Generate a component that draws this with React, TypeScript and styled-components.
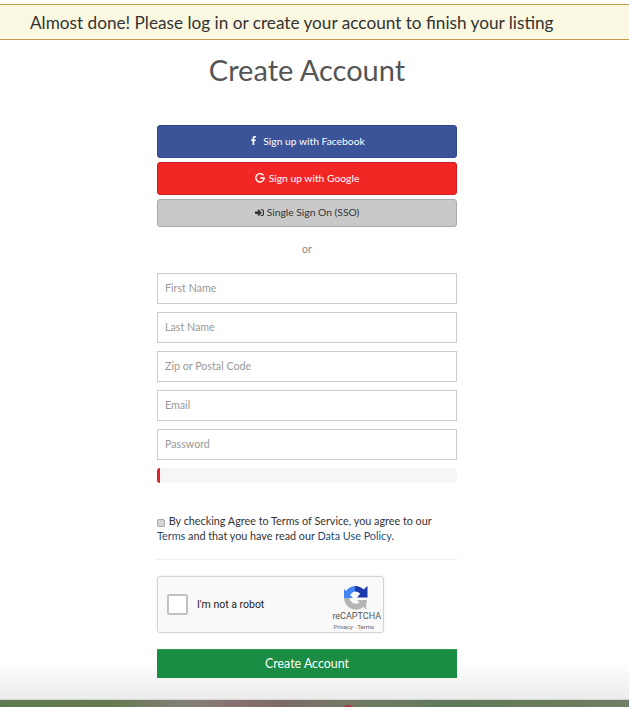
import React from "react";
import styled, { createGlobalStyle } from "styled-components";
import { FaFacebookF, FaSignInAlt } from "react-icons/fa";

const Global = createGlobalStyle`
  html, body { margin: 0; padding: 0; background: #fff; }
  body { font-family: Lato, "Open Sans", sans-serif; }
  * { box-sizing: border-box; }
`;

const Page = styled.div`
  width: 629px;
  height: 707px;
  overflow: hidden;
  display: flex;
  flex-direction: column;
  background: linear-gradient(to bottom, #fff 0, #fff 660px, #ececec 699px);
`;

const Banner = styled.div`
  height: 36px;
  margin-top: 4px;
  flex: none;
  display: flex;
  align-items: center;
  padding-left: 30px;
  background: #fbf8e1;
  border-bottom: 1px solid #c99a4b;
  border-top: 1px solid #c99a4b;
  font-size: 17.2px;
  color: #333;
`;

const Main = styled.main`
  flex: 1;
  width: 614px;
  display: flex;
  flex-direction: column;
  align-items: center;
`;

const Title = styled.h1`
  margin: 11px 0 0;
  font-size: 29px;
  line-height: 38px;
  font-weight: 400;
  color: #555;
`;

const Form = styled.form`
  width: 300px;
  margin-top: 36px;
  display: flex;
  flex-direction: column;
`;

const Social = styled.button<{ $bg: string; $edge: string; $fg: string; $h: number; $after: number; $gap: number }>`
  height: ${(p) => p.$h}px;
  margin-bottom: ${(p) => p.$after}px;
  display: flex;
  align-items: center;
  justify-content: center;
  gap: ${(p) => p.$gap}px;
  padding: 0 0 2px;
  background: ${(p) => p.$bg};
  border: 1px solid ${(p) => p.$edge};
  border-radius: 3px;
  color: ${(p) => p.$fg};
  font: 400 10.3px Lato, sans-serif;
  svg { flex: none; }
`;

const Or = styled.div`
  margin-top: 15px;
  height: 14px;
  line-height: 14px;
  text-align: center;
  font-size: 10.5px;
  color: #888;
`;

const Fields = styled.div`
  margin-top: 17px;
  display: flex;
  flex-direction: column;
  gap: 8px;
`;

const Input = styled.input`
  height: 31px;
  width: 100%;
  padding: 0 7px 2px;
  border: 1px solid #ccc;
  border-radius: 0;
  background: #fff;
  font: 400 10.7px Lato, sans-serif;
  outline: none;
  &::placeholder { color: #999; opacity: 1; }
`;

const Meter = styled.div`
  height: 15px;
  margin-top: 8px;
  background: #f6f6f6;
  border-radius: 3px;
  overflow: hidden;
`;

const MeterFill = styled.div`
  height: 100%;
  background: #d9232e;
`;

const Terms = styled.label`
  display: block;
  margin-top: 30px;
  font-size: 10.8px;
  line-height: 15px;
  color: #333;
`;

const Check = styled.input`
  appearance: none;
  display: inline-block;
  width: 8px;
  height: 8px;
  margin: 0 1px 0 0;
  vertical-align: -2px;
  background: #d4d4d4;
  border: 1px solid #a8a8a8;
  border-radius: 2px;
`;

const Link = styled.a`
  color: #1f4e79;
  text-decoration: none;
`;

const Rule = styled.hr`
  width: 100%;
  height: 1px;
  margin: 16px 0 16px;
  border: 0;
  background: #eee;
`;

const Captcha = styled.div`
  width: 227px;
  height: 57px;
  display: flex;
  align-items: center;
  padding: 0 2px 1px 9px;
  background: #f9f9f9;
  border: 1px solid #d3d3d3;
  border-radius: 3px;
  box-shadow: 0 0 3px rgba(0, 0, 0, 0.08);
`;

const CaptchaBox = styled.span`
  width: 21px;
  height: 21px;
  flex: none;
  background: #fff;
  border: 2px solid #c1c1c1;
  border-radius: 2px;
`;

const CaptchaLabel = styled.span`
  margin-left: 9px;
  flex: 1;
  font: 400 10.5px Roboto, sans-serif;
  color: #222;
`;

const CaptchaBrand = styled.div`
  display: flex;
  flex-direction: column;
  align-items: center;
  padding-top: 8px;
`;

const LogoWrap = styled.span`
  display: block;
  height: 24px;
  margin-right: 2px;
`;

const BrandName = styled.span`
  font: 400 9px/12px Roboto, sans-serif;
  color: #555;
`;

const BrandLinks = styled.span`
  align-self: flex-start;
  margin-left: 1px;
  font: 400 6px/9px Roboto, sans-serif;
  color: #666;
`;

const Submit = styled.button`
  height: 29px;
  margin-top: 16px;
  padding: 0 0 2px;
  background: #1a8c44;
  border: 0;
  border-top: 1px solid #2a9a55;
  color: #fff;
  font: 400 12.4px Lato, sans-serif;
`;

const PhotoStrip = styled.div`
  height: 8px;
  flex: none;
  position: relative;
  border-top: 1px solid #d2d2d2;
  background: linear-gradient(to right, #5f7a52 0, #65794e 17%, #84807a 30%, #8a6f72 38%, #7b6a68 45%, #757a66 55%, #5f7a5a 72%, #6a7d5a 88%, #717f66 100%);
`;

const RedSpot = styled.span`
  position: absolute;
  left: 342px;
  bottom: -4px;
  width: 12px;
  height: 6px;
  border-radius: 50%;
  background: #a33b3b;
`;

const RecaptchaLogo = () => (
  <svg width="24" height="24" viewBox="0 0 24 24" aria-hidden="true">
    <path d="M11 0a12 12 0 0 1 8.6 3.4L23.5 0v11.5H13l3.2-3.7A6.4 6.4 0 0 0 11 5.4Z" fill="#1c3aa9" />
    <path d="M11 0A12 12 0 0 0 2 5L0 3v9h9L6.3 9.2A6 6 0 0 1 11 5.4Z" fill="#4285f4" />
    <path d="M0 12h5.6a6.4 6.4 0 0 0 10 4.6L13 14h10a12 12 0 0 1-.8 4v5.5L19.4 21A12 12 0 0 1 0 12Z" fill="#b4b4b4" />
  </svg>
);

const GoogleGlyph = () => (
  <svg width="10" height="10" viewBox="0 0 24 24" aria-hidden="true" fill="none" stroke="#fff" strokeWidth="3.4">
    <path d="M20 5.5A10 10 0 1 0 22 12H12.5" />
  </svg>
);

const inputs = ["First Name", "Last Name", "Zip or Postal Code", "Email", "Password"];

export default function App() {
  return (
    <Page>
      <Global />
      <Banner>Almost done! Please log in or create your account to finish your listing</Banner>
      <Main>
        <Title>Create Account</Title>
        <Form onSubmit={(e) => e.preventDefault()}>
          <Social type="button" $bg="#3b5499" $edge="#2f4a8c" $fg="#fff" $h={33} $after={4} $gap={5}>
            <FaFacebookF size={9} /> Sign up with Facebook
          </Social>
          <Social type="button" $bg="#f22725" $edge="#c9201f" $fg="#fff" $h={33} $after={4} $gap={4}>
            <GoogleGlyph /> Sign up with Google
          </Social>
          <Social type="button" $bg="#c9c9c9" $edge="#aaa" $fg="#333" $h={28} $after={0} $gap={3}>
            <FaSignInAlt size={9} /> Single Sign On (SSO)
          </Social>
          <Or>or</Or>
          <Fields>
            {inputs.map((name) => (
              <Input key={name} placeholder={name} type={name === "Password" ? "password" : "text"} />
            ))}
          </Fields>
          <Meter>
            <MeterFill style={{ width: "3px" }} />
          </Meter>
          <Terms>
            <Check type="checkbox" /> By checking Agree to Terms of Service, you agree to our{" "}
            <Link href="#">Terms</Link> and that you have read our <Link href="#">Data Use Policy</Link>.
          </Terms>
          <Rule />
          <Captcha>
            <CaptchaBox />
            <CaptchaLabel>I'm not a robot</CaptchaLabel>
            <CaptchaBrand>
              <LogoWrap>
                <RecaptchaLogo />
              </LogoWrap>
              <BrandName>reCAPTCHA</BrandName>
              <BrandLinks>Privacy · Terms</BrandLinks>
            </CaptchaBrand>
          </Captcha>
          <Submit type="submit">Create Account</Submit>
        </Form>
      </Main>
      <PhotoStrip>
        <RedSpot />
      </PhotoStrip>
    </Page>
  );
}
